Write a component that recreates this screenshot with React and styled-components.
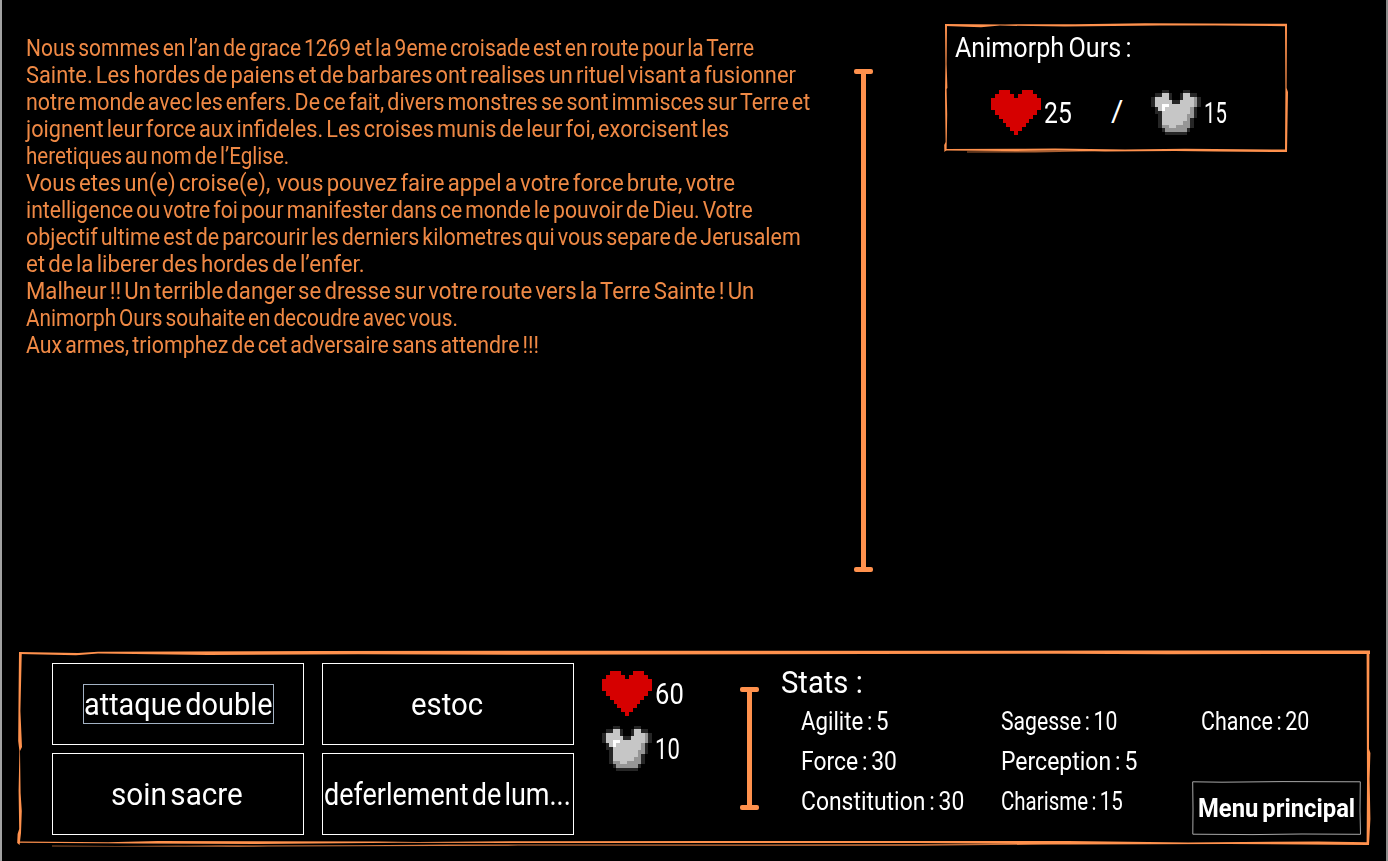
import React, { useLayoutEffect, useRef, useState } from "react";
import styled, { createGlobalStyle } from "styled-components";

const ORANGE = "#ff914d";

const GlobalStyle = createGlobalStyle`
  * { box-sizing: border-box; }
  body { margin: 0; background: #000; overflow: hidden; }
`;

const Screen = styled.main`
  width: 1388px;
  height: 861px;
  display: flex;
  flex-direction: column;
  background: #000;
  color: #fff;
  font-family: Roboto, "Liberation Sans", sans-serif;
  border-left: 2px solid #a2a2a2;
  border-right: 2px solid #8c8c8c;
`;

const Scene = styled.section`
  display: flex;
  align-items: flex-start;
  height: 651px;
`;

const Story = styled.div`
  width: 852px;
  padding: 35px 0 0 24px;
  color: #ef8945;
  font-size: 24px;
  line-height: 27px;
  word-spacing: -2.5px;
`;

const StoryLine = styled.div`
  height: 27px;
`;

const FitBox = styled.span`
  display: inline-block;
  vertical-align: top;
  white-space: pre;
  width: ${(p) => p.$width}px;
`;

const FitInner = styled.span`
  display: inline-block;
  transform-origin: 0 50%;
`;

const Rule = styled.div`
  flex: none;
  width: 19px;
  height: ${(p) => p.$height}px;
  margin-top: ${(p) => p.$top}px;
  display: flex;
  flex-direction: column;
  align-items: center;
`;

const RuleCap = styled.div`
  width: 19px;
  height: 5px;
  border-radius: 2px;
  background: ${ORANGE};
`;

const RuleBar = styled.div`
  flex: 1;
  width: 5px;
  background: ${ORANGE};
`;

const EnemyCard = styled.article`
  position: relative;
  width: 342px;
  height: 128px;
  margin: 24px 0 0 72px;
  padding: 8px 0 0 10px;
`;

const Frame = styled.svg`
  position: absolute;
  inset: 0;
  overflow: visible;
  pointer-events: none;
`;

const EnemyName = styled.h2`
  margin: 0;
  font-weight: 400;
  font-size: 28.5px;
  line-height: 32px;
  word-spacing: -2px;
`;

const EnemyVitals = styled.div`
  display: flex;
  margin: 26px 0 0 36px;
`;

const Vital = styled.div`
  display: flex;
  gap: 3px;
  height: 45px;
  font-size: 30px;
  line-height: 45px;
`;

const Slash = styled.div`
  margin: 0 28px 0 39px;
  font-size: 30px;
  line-height: 42px;
`;

const Sprite = styled.svg`
  display: block;
  flex: none;
  filter: blur(${(p) => p.$soft}px);
`;

const Panel = styled.section`
  position: relative;
  display: flex;
  align-items: flex-start;
  width: 1352px;
  height: 196px;
  margin-left: 16px;
  padding-left: 34px;
`;

const Skills = styled.div`
  flex: none;
  display: grid;
  grid-template-columns: 252px 252px;
  grid-auto-rows: 82px;
  gap: 8px 18px;
  margin-top: 12px;
`;

const SkillButton = styled.button`
  display: flex;
  align-items: center;
  justify-content: center;
  padding: 0;
  border: 1px solid #fff;
  background: #000;
  color: #fff;
  font: 400 31px Roboto, "Liberation Sans", sans-serif;
  word-spacing: -4px;
`;

const SkillLabel = styled.span`
  height: 40px;
  line-height: 40px;
  border: 1px solid ${(p) => (p.$focused ? "#a3b2c4" : "transparent")};
  padding-right: ${(p) => (p.$focused ? 1 : 2)}px;
`;

const PlayerVitals = styled.div`
  flex: none;
  display: flex;
  flex-direction: column;
  gap: 10px;
  width: 138px;
  margin: 20px 0 0 28px;
`;

const Stats = styled.div`
  flex: none;
  margin: 14px 0 0 22px;
`;

const StatsTitle = styled.h2`
  margin: 0;
  height: 37px;
  font-weight: 400;
  font-size: 31px;
  line-height: 36px;
`;

const StatsColumns = styled.div`
  display: flex;
  padding-left: 20px;
`;

const StatsColumn = styled.div`
  width: 200px;
  font-size: 25px;
  line-height: 40px;
  word-spacing: -2px;

  &:last-child {
    width: 160px;
  }
`;

const StatEntry = styled.div`
  height: 40px;
`;

const MenuButton = styled.button`
  position: relative;
  display: block;
  width: 169px;
  height: 54px;
  margin: 39px 0 0 -9px;
  padding: 0 0 0 6px;
  border: 0;
  background: #000;
  color: #fff;
  text-align: left;
  font: 700 25px/56px Roboto, "Liberation Sans", sans-serif;
  word-spacing: -2px;
`;

function Fit({ width, children }) {
  const ref = useRef(null);
  const [scale, setScale] = useState(1);
  useLayoutEffect(() => {
    setScale(width / ref.current.offsetWidth);
  }, [width, children]);
  return (
    <FitBox $width={width}>
      <FitInner ref={ref} style={{ transform: `scaleX(${scale})` }}>
        {children}
      </FitInner>
    </FitBox>
  );
}

const HEART = [
  "..RRR...RRR..",
  ".RRRRR.RRRRR.",
  "RRRRRRRRRRRRR",
  "RRRRRRRRRRRRR",
  "RRRRRRRRRRRRR",
  ".RRRRRRRRRRR.",
  "..RRRRRRRRR..",
  "...RRRRRRR...",
  "....RRRRR....",
  ".....RRR.....",
  "......R......",
];

const ARMOR = [
  "...DD....DD...",
  ".DDLLD..DLLDD.",
  "DLLLLD..DLLLSD",
  "DLLLLLDDLLLLSD",
  "DLLWWLLLLLLLSD",
  ".DLWLLLLLLLSD.",
  ".DDLLLLLLLLSD.",
  "..DLLLLLLLSSD.",
  "..DLLLLLLLSD..",
  "..DLLLLLLSSD..",
  "..DSSLLSSSSD..",
  "...DSSSSSSD...",
  "....DDDDDD....",
];

const PIXELS = { R: "#d60000", D: "#262626", L: "#c6c6c6", S: "#969696", W: "#ffffff" };

function PixelSprite({ rows, soft = 0 }) {
  return (
    <Sprite
      width="50"
      height="45"
      viewBox={`0 0 ${rows[0].length} ${rows.length}`}
      preserveAspectRatio="none"
      shapeRendering="crispEdges"
      $soft={soft}
    >
      {rows.flatMap((row, y) =>
        [...row].map((c, x) =>
          c === "." ? null : <rect key={`${x}-${y}`} x={x} y={y} width="1" height="1" fill={PIXELS[c]} />
        )
      )}
    </Sprite>
  );
}

const Heart = () => <PixelSprite rows={HEART} />;
const Armor = () => <PixelSprite rows={ARMOR} soft={0.6} />;

function Divider({ top, height }) {
  return (
    <Rule $top={top} $height={height}>
      <RuleCap />
      <RuleBar />
      <RuleCap />
    </Rule>
  );
}

const STORY = [
  ["Nous sommes en l’an de grace 1269 et la 9eme croisade est en route pour la Terre", 728],
  ["Sainte. Les hordes de paiens et de barbares ont realises un rituel visant a fusionner", 770],
  ["notre monde avec les enfers. De ce fait, divers monstres se sont immisces sur Terre et", 784],
  ["joignent leur force aux infideles. Les croises munis de leur foi, exorcisent les", 703],
  ["heretiques au nom de l’Eglise.", 263],
  ["Vous etes un(e) croise(e),  vous pouvez faire appel a votre force brute, votre", 709],
  ["intelligence ou votre foi pour manifester dans ce monde le pouvoir de Dieu. Votre", 727],
  ["objectif ultime est de parcourir les derniers kilometres qui vous separe de Jerusalem", 775],
  ["et de la liberer des hordes de l’enfer.", 339],
  ["Malheur !! Un terrible danger se dresse sur votre route vers la Terre Sainte ! Un", 728],
  ["Animorph Ours souhaite en decoudre avec vous.", 432],
  ["Aux armes, triomphez de cet adversaire sans attendre !!!", 513],
];

const SKILLS = [
  ["attaque double", 188, true],
  ["estoc", 72],
  ["soin sacre", 132],
  ["deferlement de lum...", 247],
];

const STATS = [
  [["Agilite : 5", 88], ["Force : 30", 96], ["Constitution : 30", 163]],
  [["Sagesse : 10", 116], ["Perception : 5", 136], ["Charisme : 15", 122]],
  [["Chance : 20", 108]],
];

export default function App() {
  return (
    <Screen>
      <GlobalStyle />
      <Scene>
        <Story>
          {STORY.map(([text, width]) => (
            <StoryLine key={text}>
              <Fit width={width}>{text}</Fit>
            </StoryLine>
          ))}
        </Story>
        <Divider top={69} height={503} />
        <EnemyCard>
          <Frame width="342" height="128" viewBox="0 0 342 128" fill={ORANGE}>
            <path d="M0 0 L60 .4 L130 .2 L200 -.8 L342 -.2 V2.2 L270 1.4 L215 1.6 L120 2.6 L55 1.6 L36 3.2 L0 2Z" />
            <path d="M340 0 H342 L341.6 64 L343 68 L342 128 H340 L340.4 66Z" />
            <path d="M0 0 H2 L1.6 40 L2.4 64 L1.6 65 L2.2 90 L1.6 126 L-.6 128 L-.8 121 L.6 118 L0 70 L.4 40Z" />
            <path d="M0 125 L80 124.8 L110 124.6 L180 125.4 L240 124.8 L342 125.6 V128 L270 127.6 L230 127 L160 127.6 L110 126.6 L60 127 L0 126.6Z" />
            <path opacity=".65" d="M22 127.4 L110 126.6 L150 127.2 L90 128.6 L22 128.4Z" />
          </Frame>
          <EnemyName>
            <Fit width={177}>Animorph Ours :</Fit>
          </EnemyName>
          <EnemyVitals>
            <Vital>
              <Heart />
              <Fit width={28}>25</Fit>
            </Vital>
            <Slash>
              <Fit width={12}>/</Fit>
            </Slash>
            <Vital>
              <Armor />
              <Fit width={23}>15</Fit>
            </Vital>
          </EnemyVitals>
        </EnemyCard>
      </Scene>
      <Panel>
        <Frame width="1352" height="196" viewBox="0 0 1352 196" fill={ORANGE}>
          <path d="M1 1 L60 2 L80 .8 L300 0 L700 -.3 L1100 -.4 L1352 -.4 V3 L1150 3.2 L1040 2.8 L850 3 L500 3.8 L340 3.2 L190 4 L80 2.6 L58 4.2 L1 3Z" />
          <path d="M1348.6 0 H1351.4 L1351 98 L1352.4 102 L1351.6 128 L1352.4 168 L1351 194 H1348.6 L1349 130Z" />
          <path d="M1 1 H3.8 L2.4 60 L4 96 L2 100 L2.6 142 L3.8 160 L3 182 L1.6 194 L-.8 192 L-.4 183 L1.2 178 L.6 140 L1.4 100 L.2 90 L.6 40Z" />
          <path d="M1 190.6 L90 191.2 L140 190 L360 190.4 L400 191 L510 190.2 L700 190 L1050 190 L1170 191.6 L1300 190.4 L1350 191.2 V194 L1210 193 L1050 193.4 L900 192 L500 192 L380 191.8 L240 193 L120 192.6 L1 191.8Z" />
          <path opacity=".85" d="M166 194.6 L340 194.2 L430 193.4 L700 193.6 L1000 193 L1050 193.4 L900 194.8 L500 194.6 L420 195 L240 195.6Z" />
          <path opacity=".6" d="M34 194.6 L100 195 L160 194.6 L250 195 L220 196 L34 195.6Z" />
        </Frame>
        <Skills>
          {SKILLS.map(([name, width, focused]) => (
            <SkillButton key={name}>
              <SkillLabel $focused={focused}>
                <Fit width={width}>{name}</Fit>
              </SkillLabel>
            </SkillButton>
          ))}
        </Skills>
        <PlayerVitals>
          <Vital>
            <Heart />
            <Fit width={29}>60</Fit>
          </Vital>
          <Vital>
            <Armor />
            <Fit width={25}>10</Fit>
          </Vital>
        </PlayerVitals>
        <Divider top={36} height={123} />
        <Stats>
          <StatsTitle>
            <Fit width={82}>Stats :</Fit>
          </StatsTitle>
          <StatsColumns>
            {STATS.map((column, i) => (
              <StatsColumn key={i}>
                {column.map(([text, width]) => (
                  <StatEntry key={text}>
                    <Fit width={width}>{text}</Fit>
                  </StatEntry>
                ))}
                {i === 2 && (
                  <MenuButton>
                    <Frame width="169" height="54" viewBox="0 0 169 54" fill="none" stroke="#a8a8a8">
                      <path d="M.7 .8 L30 1.2 L90 .6 L168.3 .8 L168 30 L168.5 53.3 L110 53 L60 53.6 L.8 53.2 L1 28Z" />
                    </Frame>
                    <Fit width={157}>Menu principal</Fit>
                  </MenuButton>
                )}
              </StatsColumn>
            ))}
          </StatsColumns>
        </Stats>
      </Panel>
    </Screen>
  );
}
